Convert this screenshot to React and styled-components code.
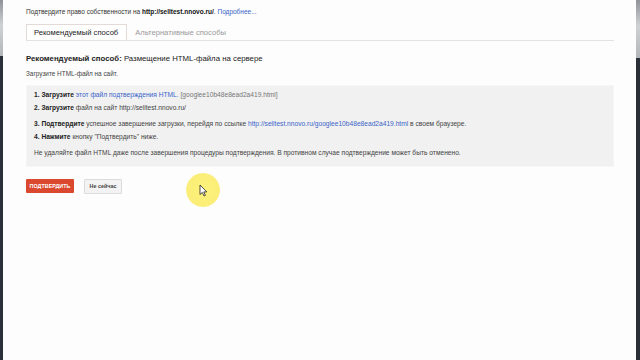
import React from "react";
import styled, { createGlobalStyle } from "styled-components";

const Global = createGlobalStyle`
  html, body { margin: 0; padding: 0; background: #fff; }
  body { font-family: "Liberation Sans", Arial, sans-serif; color: #222; }
`;

const Frame = styled.div`
  width: 640px;
  height: 360px;
  display: flex;
  position: relative;
  overflow: hidden;
  background: #fdfdfd;
`;

const Edge = styled.div`
  width: ${(p) => p.$w}px;
  flex: none;
  background: #2b3038;
`;

const EdgeTop = styled.div`
  height: ${(p) => p.$h}px;
  background: linear-gradient(to bottom, #8f9298, #cfd1d4 45%, #b3b5b9);
`;

const Main = styled.div`
  flex: 1;
  min-width: 0;
  padding: 8px 22px 0 23px;
  display: flex;
  flex-direction: column;
`;

const Notice = styled.div`
  font-size: 6.5px;
  line-height: 8px;
  color: #333;
  b { color: #111; }
`;

const Link = styled.span`
  color: #3a64c8;
`;

const Tabs = styled.div`
  display: flex;
  margin-top: 8px;
  height: 16px;
  border-bottom: 1px solid #e3e3e3;
`;

const Tab = styled.div`
  font-size: 7.6px;
  line-height: 15px;
  padding: 0 8px 0 7px;
  color: ${(p) => (p.$active ? "#222" : "#999")};
  background: ${(p) => (p.$active ? "#fff" : "transparent")};
  border: 1px solid ${(p) => (p.$active ? "#e3d9d6" : "transparent")};
  border-bottom: none;
  margin-bottom: -1px;
  height: 16px;
  box-sizing: border-box;
`;

const Heading = styled.div`
  margin-top: 13px;
  font-size: 7.8px;
  line-height: 10px;
  color: #222;
  b { font-weight: bold; }
`;

const Sub = styled.div`
  margin-top: 6px;
  font-size: 6.4px;
  line-height: 8px;
  color: #444;
`;

const Box = styled.div`
  margin-top: 7px;
  background: #f1f1f1;
  border: 1px solid #f6f6f6;
  padding: 4px 8px 9px 7px;
  display: flex;
  flex-direction: column;
`;

const Step = styled.div`
  font-size: 6.65px;
  line-height: 9px;
  color: #444;
  margin-top: ${(p) => p.$gap}px;
  b { color: #222; }
`;

const Muted = styled.span`
  color: #777;
`;

const Actions = styled.div`
  display: flex;
  gap: 10px;
  margin-top: 12px;
`;

const Primary = styled.div`
  background: #d9482f;
  color: #fff;
  font-size: 5.4px;
  font-weight: bold;
  height: 14px;
  line-height: 14px;
  width: 48px;
  text-align: center;
  border-radius: 1px;
`;

const Secondary = styled.div`
  background: #f3f3f3;
  border: 1px solid #dcdcdc;
  color: #444;
  font-size: 5.4px;
  font-weight: bold;
  height: 13px;
  line-height: 13px;
  width: 36px;
  text-align: center;
  border-radius: 1px;
`;

const Highlight = styled.div`
  position: absolute;
  left: 186px;
  top: 173px;
  width: 34px;
  height: 34px;
  border-radius: 50%;
  background: radial-gradient(circle, #fdf27a 0%, #fbee78 65%, rgba(251, 238, 120, 0.4) 90%, rgba(251, 238, 120, 0) 100%);
`;

const Cursor = styled.svg`
  position: absolute;
  left: 199px;
  top: 184px;
`;

export default function App() {
  return (
    <>
      <Global />
      <Frame>
        <Edge $w={3}>
          <EdgeTop $h={56} />
        </Edge>
        <Main>
          <Notice>
            Подтвердите право собственности на <b>http://selltest.nnovo.ru/</b>.{" "}
            <Link>Подробнее...</Link>
          </Notice>
          <Tabs>
            <Tab $active>Рекомендуемый способ</Tab>
            <Tab>Альтернативные способы</Tab>
          </Tabs>
          <Heading>
            <b>Рекомендуемый способ:</b> Размещение HTML-файла на сервере
          </Heading>
          <Sub>Загрузите HTML-файл на сайт.</Sub>
          <Box>
            <Step $gap={0}>
              <b>1. Загрузите</b> <Link>этот файл подтверждения HTML.</Link>{" "}
              <Muted>[googlee10b48e8ead2a419.html]</Muted>
            </Step>
            <Step $gap={4}>
              <b>2. Загрузите</b> файл на сайт http://selltest.nnovo.ru/
            </Step>
            <Step $gap={7}>
              <b>3. Подтвердите</b> успешное завершение загрузки, перейдя по ссылке{" "}
              <Link>http://selltest.nnovo.ru/googlee10b48e8ead2a419.html</Link> в своем браузере.
            </Step>
            <Step $gap={4}>
              <b>4. Нажмите</b> кнопку "Подтвердить" ниже.
            </Step>
            <Step $gap={7}>
              Не удаляйте файл HTML даже после завершения процедуры подтверждения. В противном случае подтверждение может быть отменено.
            </Step>
          </Box>
          <Actions>
            <Primary>ПОДТВЕРДИТЬ</Primary>
            <Secondary>Не сейчас</Secondary>
          </Actions>
        </Main>
        <Edge $w={4}>
          <EdgeTop $h={58} />
        </Edge>
        <Highlight />
        <Cursor width="9" height="13" viewBox="0 0 9 13">
          <path d="M1 1 L1 10.5 L3.3 8.4 L5 12 L6.4 11.4 L4.8 7.9 L7.8 7.9 Z" fill="#fff" stroke="#222" strokeWidth="0.8" strokeLinejoin="round" />
        </Cursor>
      </Frame>
    </>
  );
}
